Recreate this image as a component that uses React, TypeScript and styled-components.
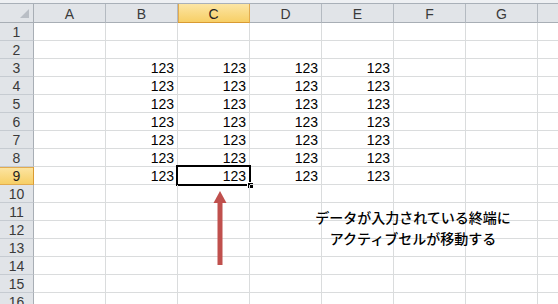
import React from 'react';
import styled, { createGlobalStyle, css } from 'styled-components';

const COLS = ['A', 'B', 'C', 'D', 'E', 'F', 'G', 'H'];
const ROWS = Array.from({ length: 16 }, (_, i) => i + 1);
const ACTIVE_COL = 'C';
const ACTIVE_ROW = 9;

function valueAt(col: string, row: number) {
  if (row >= 3 && row <= 9 && 'BCDE'.includes(col)) return '123';
  return '';
}

function App() {
  return (
    <>
      <GlobalStyle />
      <Window>
        <TopStrip />
        <Sheet>
          <Corner>
            <CornerMark />
          </Corner>
          {COLS.map((c) => (
            <ColHeader key={c} selected={c === ACTIVE_COL}>{c}</ColHeader>
          ))}
          {ROWS.map((r) => (
            <React.Fragment key={r}>
              <RowHeader selected={r === ACTIVE_ROW}>{r}</RowHeader>
              {COLS.map((c) => {
                const active = c === ACTIVE_COL && r === ACTIVE_ROW;
                return (
                  <Cell key={c}>
                    {valueAt(c, r)}
                    {active && (
                      <ActiveFrame>
                        <FillHandle />
                      </ActiveFrame>
                    )}
                  </Cell>
                );
              })}
            </React.Fragment>
          ))}
        </Sheet>
        <Arrow width="16" height="78" viewBox="0 0 16 78">
          <polygon points="8,1 1.5,13 14.5,13" fill="#c0504d" />
          <rect x="5.5" y="12" width="5" height="63" fill="#c0504d" />
        </Arrow>
        <Note>
          データが入力されている終端に
          <br />
          アクティブセルが移動する
        </Note>
      </Window>
    </>
  );
}

const GlobalStyle = createGlobalStyle`
  html, body {
    margin: 0;
    padding: 0;
    background: #ffffff;
    overflow: hidden;
  }
`;

const Window = styled.div`
  position: relative;
  width: 558px;
  height: 304px;
  overflow: hidden;
  background: #ffffff;
  font-family: "Liberation Sans", Arial, sans-serif;
`;

const TopStrip = styled.div`
  height: 3px;
  background: #eef0f3;
  border-bottom: 1px solid #a9b0b8;
`;

const Sheet = styled.div`
  display: grid;
  grid-template-columns: 34px repeat(8, 72px);
  grid-template-rows: 19px;
  grid-auto-rows: 18px;
`;

const headerBase = css`
  box-sizing: border-box;
  display: flex;
  align-items: center;
  justify-content: center;
  font-size: 14px;
  color: #3a3a3a;
  background: #e1e4e8;
`;

const selectedHeader = css`
  background: linear-gradient(#fce5a4, #f7cf66);
  color: #222222;
`;

const Corner = styled.div`
  ${headerBase};
  position: relative;
  border-right: 1px solid #a8aeb5;
  border-bottom: 1px solid #a8aeb5;
`;

const CornerMark = styled.div`
  position: absolute;
  right: 4px;
  bottom: 4px;
  width: 0;
  height: 0;
  border-left: 9px solid transparent;
  border-bottom: 9px solid #b9bec5;
`;

const ColHeader = styled.div<{ selected?: boolean }>`
  ${headerBase};
  border-right: 1px solid #b4bac1;
  border-bottom: 1px solid #a8aeb5;
  padding-top: 1px;
  ${(p) => p.selected && selectedHeader};
  ${(p) => p.selected && css`
    border-bottom-color: #d99a32;
    border-right-color: #e2ab4f;
    box-shadow: inset 1px 0 0 #e2ab4f;
  `};
`;

const RowHeader = styled.div<{ selected?: boolean }>`
  ${headerBase};
  border-right: 1px solid #a8aeb5;
  border-bottom: 1px solid #c6cbd1;
  ${(p) => p.selected && selectedHeader};
  ${(p) => p.selected && css`
    border-right-color: #d99a32;
    border-bottom-color: #e2ab4f;
    box-shadow: inset 0 1px 0 #e2ab4f;
  `};
`;

const Cell = styled.div`
  position: relative;
  box-sizing: border-box;
  border-right: 1px solid #dadcdd;
  border-bottom: 1px solid #dadcdd;
  display: flex;
  align-items: center;
  justify-content: flex-end;
  padding-right: 3px;
  font-size: 14px;
  color: #000000;
`;

const ActiveFrame = styled.div`
  position: absolute;
  left: -2px;
  top: -2px;
  right: -2px;
  bottom: -2px;
  border: 2px solid #000000;
  pointer-events: none;
`;

const FillHandle = styled.div`
  position: absolute;
  right: -5px;
  bottom: -5px;
  width: 5px;
  height: 5px;
  background: #000000;
  border: 1px solid #ffffff;
`;

const Arrow = styled.svg`
  position: absolute;
  left: 212px;
  top: 190px;
`;

const Note = styled.div`
  position: absolute;
  left: 313px;
  top: 207px;
  width: 200px;
  text-align: center;
  font-family: "Noto Sans CJK JP", sans-serif;
  font-size: 14px;
  font-weight: 500;
  line-height: 21px;
  color: #000000;
`;

export default App;
